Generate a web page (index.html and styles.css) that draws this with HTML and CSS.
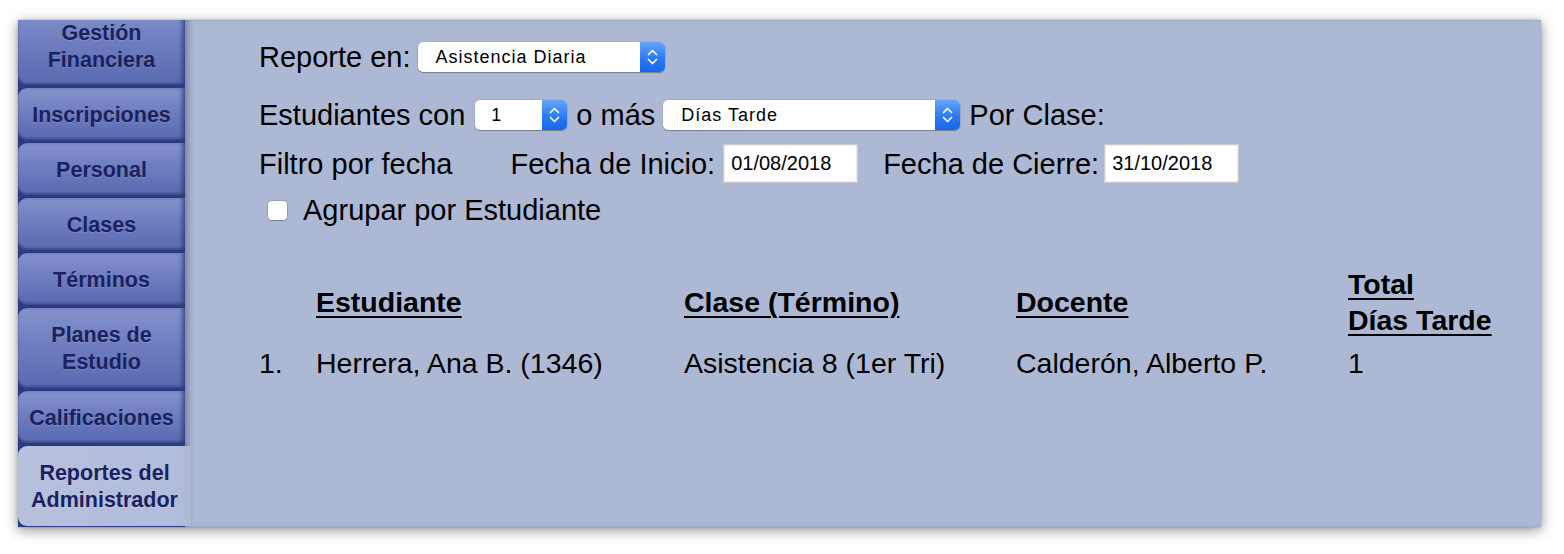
FILE: index.html
```html
<!DOCTYPE html>
<html lang="es">
<head>
<meta charset="utf-8">
<title>Reportes del Administrador</title>
<link rel="stylesheet" href="styles.css">
</head>
<body>
<div class="window">
  <nav class="sidebar">
    <div class="tab tab-top">Gestión<br>Financiera</div>
    <div class="tab">Inscripciones</div>
    <div class="tab">Personal</div>
    <div class="tab">Clases</div>
    <div class="tab">Términos</div>
    <div class="tab tab-tall">Planes de<br>Estudio</div>
    <div class="tab">Calificaciones</div>
    <div class="tab tab-tall tab-active">Reportes del<br>Administrador</div>
  </nav>
  <main class="main">
    <div class="row row-1">
      <span class="label">Reporte en:</span>
      <div class="select select-report">
        <span class="select-text">Asistencia Diaria</span>
        <span class="stepper"><svg width="25" height="30" viewBox="0 0 25 30"><path d="M8.5 12.5 L12.5 8.5 L16.5 12.5 M8.5 17.5 L12.5 21.5 L16.5 17.5" fill="none" stroke="#fff" stroke-width="1.7" stroke-linecap="round" stroke-linejoin="round"/></svg></span>
      </div>
    </div>
    <div class="row row-2">
      <span class="label lbl-est">Estudiantes con</span>
      <div class="select select-count">
        <span class="select-text">1</span>
        <span class="stepper"><svg width="25" height="30" viewBox="0 0 25 30"><path d="M8.5 12.5 L12.5 8.5 L16.5 12.5 M8.5 17.5 L12.5 21.5 L16.5 17.5" fill="none" stroke="#fff" stroke-width="1.7" stroke-linecap="round" stroke-linejoin="round"/></svg></span>
      </div>
      <span class="label lbl-mas">o más</span>
      <div class="select select-type">
        <span class="select-text">Días Tarde</span>
        <span class="stepper"><svg width="25" height="30" viewBox="0 0 25 30"><path d="M8.5 12.5 L12.5 8.5 L16.5 12.5 M8.5 17.5 L12.5 21.5 L16.5 17.5" fill="none" stroke="#fff" stroke-width="1.7" stroke-linecap="round" stroke-linejoin="round"/></svg></span>
      </div>
      <span class="label lbl-clase">Por Clase:</span>
    </div>
    <div class="row row-3">
      <span class="label">Filtro por fecha</span>
      <span class="label label-start">Fecha de Inicio:</span>
      <div class="date-input">01/08/2018</div>
      <span class="label label-end">Fecha de Cierre:</span>
      <div class="date-input">31/10/2018</div>
    </div>
    <div class="row row-4">
      <span class="checkbox"></span>
      <span class="label">Agrupar por Estudiante</span>
    </div>
    <div class="report">
      <div class="cell head-num"></div>
      <div class="cell head">Estudiante</div>
      <div class="cell head">Clase (Término)</div>
      <div class="cell head">Docente</div>
      <div class="cell head">Total<br>Días Tarde</div>
      <div class="cell data">1.</div>
      <div class="cell data">Herrera, Ana B. (1346)</div>
      <div class="cell data">Asistencia 8 (1er Tri)</div>
      <div class="cell data">Calderón, Alberto P.</div>
      <div class="cell data">1</div>
    </div>
  </main>
</div>
</body>
</html>
```

FILE: styles.css
```css
* { box-sizing: border-box; }

html, body {
  margin: 0;
  padding: 0;
  background: #ffffff;
}

body {
  width: 1564px;
  height: 554px;
  overflow: hidden;
  font-family: "Liberation Sans", Arial, sans-serif;
}

.window {
  margin: 20px 0 0 18px;
  width: 1523px;
  height: 507px;
  display: flex;
  background: #adb9d4;
  box-shadow: 0 3px 12px rgba(0, 0, 0, 0.45), 0 0 2px rgba(0, 0, 0, 0.25);
  overflow: hidden;
}

/* ---------- sidebar ---------- */
.sidebar {
  width: 167px;
  flex: none;
  display: flex;
  flex-direction: column;
  gap: 3px;
  background: #2c3a82;
}

.tab {
  flex: none;
  height: 52px;
  padding-top: 2px;
  display: flex;
  align-items: center;
  justify-content: center;
  text-align: center;
  font-weight: bold;
  font-size: 21.5px;
  line-height: 27px;
  color: #19215f;
  text-shadow: 0 1px 0 rgba(255, 255, 255, 0.15);
  border-radius: 9px 0 0 9px;
  background: linear-gradient(#8593cd 0%, #6f7ec0 45%, #5969b0 100%);
  box-shadow: inset -4px 0 4px -1px rgba(25, 35, 95, 0.55), inset 0 -2px 2px rgba(30, 40, 100, 0.35);
}

.tab-tall { height: 80px; }

.tab-top {
  height: 80px;
  margin-top: -15px;
  padding-top: 4px;
  border-radius: 0 0 0 9px;
}

.tab-active {
  position: relative;
  z-index: 1;
  margin-right: -6px;
  height: 80px;
  background: linear-gradient(90deg, #b7c1de 0%, #b2bcdb 90%, #adb9d4 100%);
  box-shadow: none;
}

/* ---------- main ---------- */
.main {
  flex: 1;
  padding: 22px 0 0 74px;
  color: #000;
  box-shadow: inset 6px 0 5px -2px rgba(40, 52, 110, 0.35);
}

.row {
  display: flex;
  align-items: center;
  font-size: 29px;
  white-space: nowrap;
}

.label { line-height: 30px; }

.row-1 { height: 30px; }
.row-1 .label { margin-right: 7px; }

.row-2 { height: 30px; margin-top: 28px; }
.lbl-est { margin-right: 10px; }
.lbl-mas { margin-left: 9px; margin-right: 8px; }
.lbl-clase { margin-left: 9px; }

.row-3 { height: 39px; margin-top: 14px; }
.label-start { margin-left: 58px; margin-right: 8px; }
.label-end { margin-left: 25px; margin-right: 5px; }

.row-4 { height: 34px; margin-top: 10px; }

/* select boxes */
.select {
  height: 30px;
  display: flex;
  align-items: center;
  background: #ffffff;
  border-radius: 5px;
  box-shadow: 0 1px 1px rgba(0, 0, 0, 0.28), 0 0 0 0.5px rgba(0, 0, 0, 0.12);
  overflow: hidden;
}

.select-text {
  flex: 1;
  font-size: 18px;
  letter-spacing: 1px;
  color: #000;
  padding-left: 18px;
}

.select-report { width: 247px; }
.select-count { width: 92px; }
.select-count .select-text { padding-left: 16px; }
.select-type { width: 297px; }

.stepper {
  width: 25px;
  height: 30px;
  flex: none;
  display: block;
  background: linear-gradient(#64a6fb, #2a7bf3 55%, #1766ea);
}

.stepper svg { display: block; }

/* date inputs */
.date-input {
  width: 135px;
  height: 39px;
  background: #ffffff;
  border: 1px solid #c9c9c9;
  box-shadow: inset 0 0 0 1px #eeeeee;
  font-size: 20px;
  line-height: 37px;
  padding-left: 7px;
}

/* checkbox */
.checkbox {
  width: 19px;
  height: 19px;
  margin-left: 9px;
  margin-right: 16px;
  background: #ffffff;
  border-radius: 4px;
  box-shadow: 0 0 0 1px rgba(0, 0, 0, 0.12), 0 1px 1px rgba(0, 0, 0, 0.2);
}

/* report table */
.report {
  margin-top: 39px;
  display: grid;
  grid-template-columns: 57px 368px 332px 332px 200px;
  align-items: center;
  font-size: 28.5px;
  line-height: 36px;
}

.head {
  font-weight: bold;
  text-decoration: underline;
  text-decoration-thickness: 2px;
  text-underline-offset: 4px;
}

.data {
  margin-top: 7px;
}
```
